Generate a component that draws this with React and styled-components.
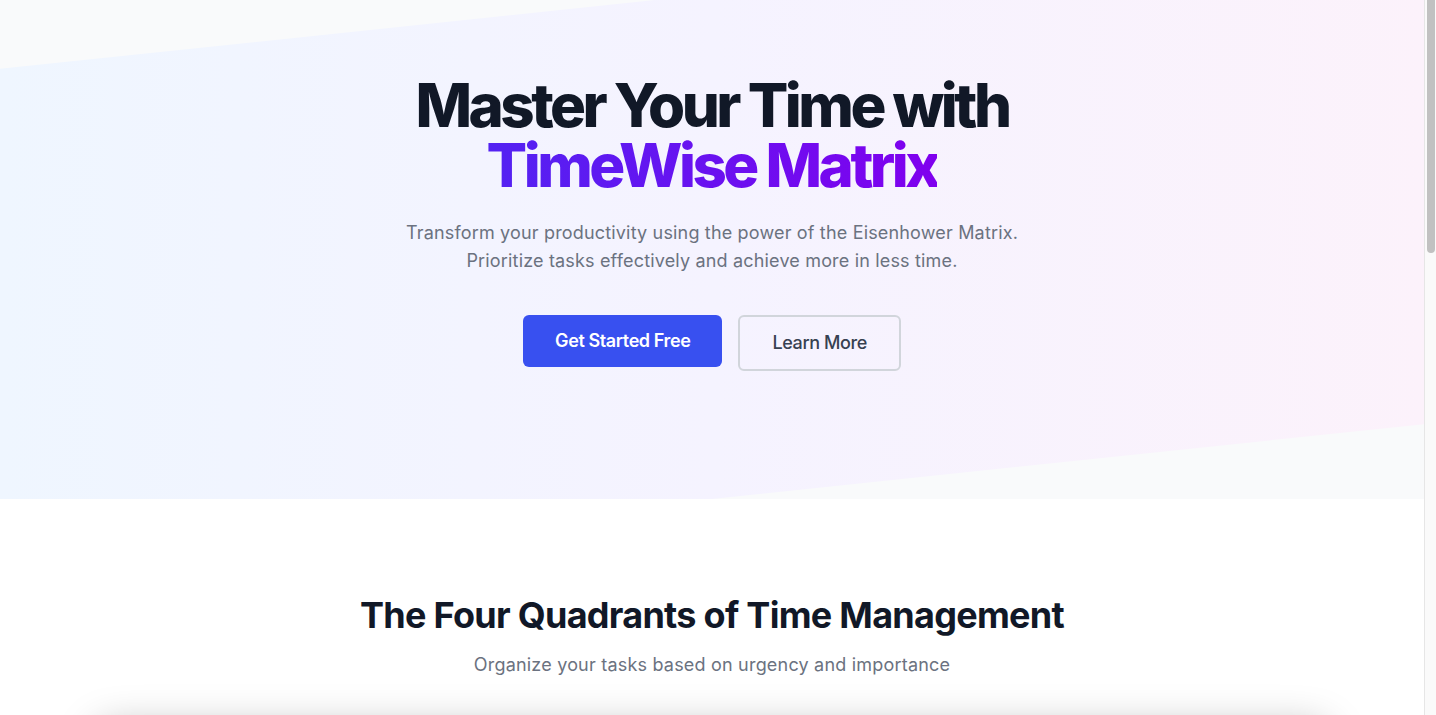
import React from "react";
import styled, { createGlobalStyle } from "styled-components";

const GlobalStyle = createGlobalStyle`
  html, body {
    height: 100%;
    overflow: hidden;
  }
  body {
    margin: 0;
    font-family: Inter, "Noto Sans", Arial, sans-serif;
    background: #ffffff;
    color: #111827;
    -webkit-font-smoothing: antialiased;
  }
  * {
    box-sizing: border-box;
  }
`;

const quadrants = [
  {
    title: "Do First",
    tag: "Urgent & Important",
    tone: "#ef4444",
    tint: "#fef2f2",
    items: ["Crisis situations", "Deadline-driven projects", "Pressing problems"],
  },
  {
    title: "Schedule",
    tag: "Not Urgent & Important",
    tone: "#3b82f6",
    tint: "#eff6ff",
    items: ["Long-term planning", "Relationship building", "Personal growth"],
  },
  {
    title: "Delegate",
    tag: "Urgent & Not Important",
    tone: "#eab308",
    tint: "#fefce8",
    items: ["Interruptions", "Some meetings", "Other people's priorities"],
  },
  {
    title: "Eliminate",
    tag: "Not Urgent & Not Important",
    tone: "#6b7280",
    tint: "#f9fafb",
    items: ["Time wasters", "Busy work", "Excessive social media"],
  },
];

export default function App() {
  return (
    <>
      <GlobalStyle />
      <Frame>
        <Page>
          <Hero>
            <Backdrop />
            <HeroContent>
              <Title>
                Master Your Time with
                <br />
                <Accent>TimeWise Matrix</Accent>
              </Title>
              <Lead>
                Transform your productivity using the power of the Eisenhower Matrix.
                <br />
                Prioritize tasks effectively and achieve more in less time.
              </Lead>
              <Actions>
                <Button $primary>Get Started Free</Button>
                <Button>Learn More</Button>
              </Actions>
            </HeroContent>
          </Hero>

          <Section>
            <SectionTitle>The Four Quadrants of Time Management</SectionTitle>
            <SectionText>Organize your tasks based on urgency and importance</SectionText>
            <MatrixCard>
              {quadrants.map((q) => (
                <Quadrant key={q.title} $tint={q.tint} $tone={q.tone}>
                  <QuadrantTag $tone={q.tone}>{q.tag}</QuadrantTag>
                  <QuadrantTitle>{q.title}</QuadrantTitle>
                  <QuadrantList>
                    {q.items.map((item) => (
                      <li key={item}>{item}</li>
                    ))}
                  </QuadrantList>
                </Quadrant>
              ))}
            </MatrixCard>
          </Section>
        </Page>

        {/* browser scrollbar as seen in the screenshot */}
        <ScrollTrack>
          <ScrollThumb />
        </ScrollTrack>
      </Frame>
    </>
  );
}

const Frame = styled.div`
  display: flex;
  height: 100vh;
`;

const Page = styled.main`
  flex: 1;
  min-width: 0;
  overflow: hidden;
`;

const ScrollTrack = styled.div`
  flex: none;
  width: 12px;
  padding: 0 1px 0 2px;
  background: #fafafa;
  border-left: 1px solid #e6e6e6;
`;

const ScrollThumb = styled.div`
  height: 253px;
  border-radius: 0 0 4px 4px;
  background: #c1c1c1;
`;

const Hero = styled.section`
  position: relative;
  overflow: hidden;
  background: #f9fafb;
  padding: 75px 24px 128px;
`;

// skewed gradient band behind the hero text
const Backdrop = styled.div`
  position: absolute;
  top: -6px;
  left: 0;
  right: 0;
  bottom: 0;
  background: linear-gradient(to right, #eff6ff, #f5f3ff 50%, #fcf2fb);
  transform: skewY(-6deg);
`;

const HeroContent = styled.div`
  position: relative;
  max-width: 896px;
  margin: 0 auto;
  text-align: center;
`;

const Title = styled.h1`
  margin: 0 0 24px;
  font-size: 60px;
  line-height: 1;
  font-weight: 800;
  letter-spacing: -3.5px;
  color: #111827;
`;

const Accent = styled.span`
  background: linear-gradient(to right, #5322f2, #8000ee);
  -webkit-background-clip: text;
  background-clip: text;
  color: transparent;
`;

const Lead = styled.p`
  margin: 0 0 40px;
  font-size: 18px;
  line-height: 28px;
  letter-spacing: 0.17px;
  color: #6b7280;
`;

const Actions = styled.div`
  display: flex;
  justify-content: center;
  align-items: flex-start;
  gap: 16px;
`;

const Button = styled.button`
  font-family: inherit;
  font-size: 18px;
  line-height: 28px;
  letter-spacing: -0.4px;
  padding: 12px 32px;
  border-radius: 6px;
  cursor: pointer;
  font-weight: ${(p) => (p.$primary ? 600 : 500)};
  color: ${(p) => (p.$primary ? "#ffffff" : "#374151")};
  background: ${(p) => (p.$primary ? "#3850f0" : "transparent")};
  border: ${(p) => (p.$primary ? "none" : "2px solid #d1d5db")};
`;

const Section = styled.section`
  padding: 96px 24px;
  text-align: center;
`;

const SectionTitle = styled.h2`
  margin: 0 0 16px;
  font-size: 36px;
  line-height: 40px;
  font-weight: 700;
  letter-spacing: -0.72px;
  color: #111827;
`;

const SectionText = styled.p`
  margin: 0 0 48px;
  font-size: 18px;
  line-height: 28px;
  letter-spacing: 0.2px;
  color: #6b7280;
`;

const MatrixCard = styled.div`
  max-width: 1232px;
  margin: 0 auto;
  padding: 32px;
  background: #ffffff;
  border-radius: 16px;
  box-shadow: 0 0 40px rgba(0, 0, 0, 0.28);
  display: grid;
  grid-template-columns: 1fr 1fr;
  gap: 24px;
  text-align: left;
`;

const Quadrant = styled.div`
  height: 300px;
  padding: 28px;
  border-radius: 12px;
  background: ${(p) => p.$tint};
  border-left: 4px solid ${(p) => p.$tone};
`;

const QuadrantTag = styled.span`
  display: inline-block;
  font-size: 13px;
  font-weight: 600;
  color: ${(p) => p.$tone};
  text-transform: uppercase;
  letter-spacing: 0.05em;
`;

const QuadrantTitle = styled.h3`
  margin: 8px 0 16px;
  font-size: 24px;
  font-weight: 700;
`;

const QuadrantList = styled.ul`
  margin: 0;
  padding-left: 20px;
  color: #4b5563;
  font-size: 16px;
  line-height: 32px;
`;
